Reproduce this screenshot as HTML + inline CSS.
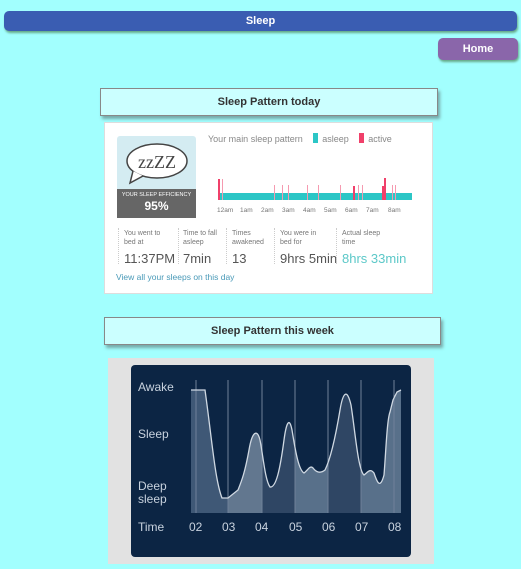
<!DOCTYPE html>
<html><head><meta charset="utf-8"><style>
*{margin:0;padding:0;box-sizing:border-box}
body{width:521px;height:569px;background:#a2fffe;font-family:"Liberation Sans",sans-serif;position:relative;overflow:hidden}
.a{position:absolute}
.bar{left:4px;top:11px;width:513px;height:20px;background:#3a5db2;border-radius:5px;box-shadow:1px 2px 2px #6a8;color:#fff;font-weight:bold;font-size:11px;text-align:center;line-height:20px}
.home{left:438px;top:38px;width:80px;height:22px;background:#8a66aa;border-radius:5px;box-shadow:1px 2px 2px #6a8;color:#fff;font-weight:bold;font-size:11px;text-align:center;line-height:22px}
.hd{background:#cbffff;border:1px solid #888;box-shadow:2px 3px 3px #7aa;font-weight:bold;font-size:11px;color:#333;text-align:center}
.card{left:104px;top:122px;width:329px;height:172px;background:#fff;border:1px solid #ddd}
.st{font-size:7px;color:#777;line-height:9px}
.sv{font-size:13px;color:#555}
</style></head><body>
<div class="a bar">Sleep</div>
<div class="a home">Home</div>
<div class="a hd" style="left:100px;top:88px;width:338px;height:28px;line-height:26px">Sleep Pattern today</div>
<div class="a card"></div>
<div class="a" style="left:117px;top:136px;width:79px;height:53px;background:#d4ecf2;border-radius:3px 3px 0 0"></div>
<svg class="a" style="left:117px;top:136px" width="79" height="53"><ellipse cx="40" cy="25" rx="30" ry="17" fill="#fff" stroke="#444" stroke-width="1.5"/><path d="M16 35 L13 47 L26 40" fill="#fff" stroke="#444" stroke-width="1.5"/><text x="40" y="32" font-family="Liberation Serif" font-size="18" fill="#444" text-anchor="middle">zzZZ</text></svg>
<div class="a" style="left:117px;top:189px;width:79px;height:29px;background:#666;color:#fff;text-align:center"><div style="font-size:5.5px;margin-top:3px">YOUR SLEEP EFFICIENCY</div><div style="font-size:12px;font-weight:bold;margin-top:1px">95%</div></div>
<div class="a" style="left:208px;top:133px;font-size:9px;color:#888">Your main sleep pattern <span style="display:inline-block;width:5px;height:10px;background:#2cc6c6;margin:0 4px -1px 8px"></span>asleep <span style="display:inline-block;width:5px;height:10px;background:#f0406a;margin:0 4px -1px 8px"></span>active</div>
<svg class="a" style="left:216px;top:176px" width="200" height="40">
<rect x="2" y="17" width="194" height="7" fill="#2cc6c6"/>
<g fill="#f0406a"><rect x="2" y="3" width="2" height="21"/><rect x="168" y="2" width="2" height="22"/><rect x="166" y="10" width="2" height="14"/><rect x="137" y="10" width="2" height="14"/></g>
<g fill="#f59ab0"><rect x="6" y="3" width="1" height="21"/><rect x="58" y="9" width="1" height="15"/><rect x="66" y="9" width="1" height="15"/><rect x="72" y="9" width="1" height="15"/><rect x="91" y="9" width="1" height="15"/><rect x="102" y="9" width="1" height="15"/><rect x="124" y="9" width="1" height="15"/><rect x="142" y="9" width="1" height="15"/><rect x="146" y="9" width="1" height="15"/><rect x="176" y="9" width="1" height="15"/><rect x="179" y="9" width="1" height="15"/></g>
<g font-size="6.5" fill="#777" font-family="Liberation Sans"><text x="1" y="36">12am</text><text x="24" y="36">1am</text><text x="45" y="36">2am</text><text x="66" y="36">3am</text><text x="87" y="36">4am</text><text x="108" y="36">5am</text><text x="129" y="36">6am</text><text x="150" y="36">7am</text><text x="172" y="36">8am</text></g></svg>
<div class="a" style="left:118px;top:228px;height:36px;border-left:1px dotted #ccc"></div>
<div class="a" style="left:124px;top:229px"><div class="st">You went to<br>bed at</div><div class="sv" style="margin-top:4px">11:37PM</div></div>
<div class="a" style="left:178px;top:228px;height:36px;border-left:1px dotted #ccc"></div>
<div class="a" style="left:183px;top:229px"><div class="st">Time to fall<br>asleep</div><div class="sv" style="margin-top:4px">7min</div></div>
<div class="a" style="left:226px;top:228px;height:36px;border-left:1px dotted #ccc"></div>
<div class="a" style="left:232px;top:229px"><div class="st">Times<br>awakened</div><div class="sv" style="margin-top:4px">13</div></div>
<div class="a" style="left:274px;top:228px;height:36px;border-left:1px dotted #ccc"></div>
<div class="a" style="left:280px;top:229px"><div class="st">You were in<br>bed for</div><div class="sv" style="margin-top:4px">9hrs 5min</div></div>
<div class="a" style="left:336px;top:228px;height:36px;border-left:1px dotted #ccc"></div>
<div class="a" style="left:342px;top:229px"><div class="st">Actual sleep<br>time</div><div class="sv" style="margin-top:4px;color:#5cc8c8">8hrs 33min</div></div>
<div class="a" style="left:116px;top:272px;font-size:8.5px;color:#4a9ab8">View all your sleeps on this day</div>
<div class="a hd" style="left:104px;top:317px;width:337px;height:28px;line-height:26px">Sleep Pattern this week</div>
<div class="a" style="left:108px;top:358px;width:326px;height:206px;background:#e2e2e2"></div>
<svg class="a" style="left:0;top:0" width="521" height="569">
<rect x="131" y="365" width="280" height="192" rx="4" fill="#0c2544"/>
<defs><clipPath id="c"><path d="M191 513 L191 390 L205 390 C212 440 215 480 222 498 L228 498 L238 490 C242 480 245 472 249 450 C252 432 257 428 260 440 C263 455 265 480 270 487 C276 488 280 470 284 440 C286 425 289 415 292 430 C296 455 299 470 304 473 C308 470 310 465 313 468 C316 472 320 474 325 470 C330 460 335 440 340 410 C343 392 347 388 351 405 C355 430 358 470 364 475 C368 472 370 468 374 473 C377 482 380 490 384 475 C386 450 387 420 390 412 L393 400 L397 392 L401 390 L401 513 Z"/></clipPath></defs>
<g clip-path="url(#c)">
<rect x="191" y="380" width="37" height="133" fill="#3f5876"/>
<rect x="228" y="380" width="34" height="133" fill="#62778f"/>
<rect x="262" y="380" width="33" height="133" fill="#2f4664"/>
<rect x="295" y="380" width="33" height="133" fill="#58708a"/>
<rect x="328" y="380" width="33" height="133" fill="#2f4664"/>
<rect x="361" y="380" width="40" height="133" fill="#58708a"/>
</g>
<g stroke="#6f8199" stroke-width="1"><line x1="196" y1="380" x2="196" y2="513"/><line x1="228" y1="380" x2="228" y2="513"/><line x1="262" y1="380" x2="262" y2="513"/><line x1="295" y1="380" x2="295" y2="513"/><line x1="328" y1="380" x2="328" y2="513"/><line x1="361" y1="380" x2="361" y2="513"/><line x1="394" y1="380" x2="394" y2="513"/></g>
<path d="M191 390 L205 390 C212 440 215 480 222 498 L228 498 L238 490 C242 480 245 472 249 450 C252 432 257 428 260 440 C263 455 265 480 270 487 C276 488 280 470 284 440 C286 425 289 415 292 430 C296 455 299 470 304 473 C308 470 310 465 313 468 C316 472 320 474 325 470 C330 460 335 440 340 410 C343 392 347 388 351 405 C355 430 358 470 364 475 C368 472 370 468 374 473 C377 482 380 490 384 475 C386 450 387 420 390 412 L393 400 L397 392 L401 390" fill="none" stroke="#cfd8e2" stroke-width="1.3"/>
<g fill="#c8d2de" font-family="Liberation Sans" font-size="12"><text x="138" y="391">Awake</text><text x="138" y="438">Sleep</text><text x="138" y="490">Deep</text><text x="138" y="503">sleep</text><text x="138" y="531">Time</text>
<text x="189" y="531">02</text><text x="222" y="531">03</text><text x="255" y="531">04</text><text x="289" y="531">05</text><text x="322" y="531">06</text><text x="355" y="531">07</text><text x="388" y="531">08</text></g>
</svg>
</body></html>
